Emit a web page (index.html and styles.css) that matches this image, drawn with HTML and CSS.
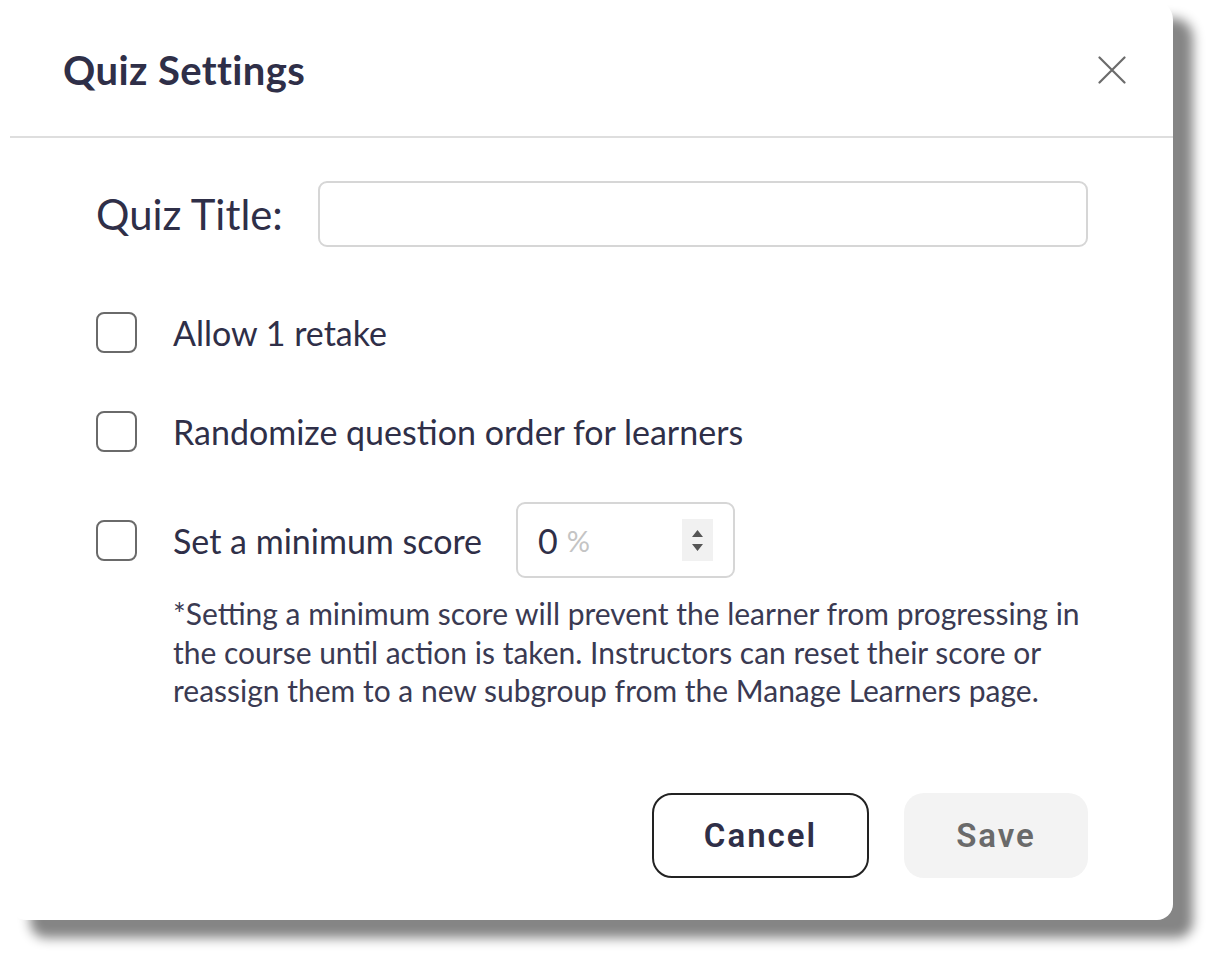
FILE: index.html
```html
<!DOCTYPE html>
<html>
<head>
<meta charset="utf-8">
<link rel="stylesheet" href="styles.css">
</head>
<body>
<div class="dialog">
  <div class="header">
    <h1 class="title">Quiz Settings</h1>
    <button class="close" aria-label="Close">
      <svg width="28" height="28" viewBox="0 0 28 28"><path d="M1.5 1.5 L26.5 26.5 M26.5 1.5 L1.5 26.5" stroke="#6b6b6b" stroke-width="2.2" stroke-linecap="round" fill="none"/></svg>
    </button>
  </div>
  <div class="content">
    <div class="title-row">
      <label class="title-label">Quiz Title:</label>
      <div class="text-input"></div>
    </div>
    <div class="check-row first">
      <span class="checkbox"></span>
      <span class="check-label">Allow 1 retake</span>
    </div>
    <div class="check-row second">
      <span class="checkbox"></span>
      <span class="check-label">Randomize question order for learners</span>
    </div>
    <div class="check-row third">
      <span class="checkbox"></span>
      <span class="check-label">Set a minimum score</span>
      <div class="num-input">
        <span class="num-value">0</span><span class="num-unit">%</span>
        <span class="spinner">
          <svg width="31" height="42" viewBox="0 0 31 42"><path d="M10 18 L15.5 11 L21 18 Z M10 25 L21 25 L15.5 32 Z" fill="#555"/></svg>
        </span>
      </div>
    </div>
    <p class="note">*Setting a minimum score will prevent the learner from progressing in<br>the course until action is taken. Instructors can reset their score or<br>reassign them to a new subgroup from the Manage Learners page.</p>
    <div class="actions">
      <button class="btn cancel">Cancel</button>
      <button class="btn save">Save</button>
    </div>
  </div>
</div>
</body>
</html>
```

FILE: styles.css
```css
* { box-sizing: border-box; }
html, body { margin: 0; padding: 0; background: #fff; }
body {
  font-family: Lato, "Noto Sans", sans-serif;
  color: #2f2f48;
  width: 1226px;
  height: 966px;
  overflow: hidden;
}
.dialog {
  margin-left: 10px;
  width: 1163px;
  height: 920px;
  background: #fff;
  border-radius: 20px 20px 16px 16px;
  box-shadow: 20px 18px 12px #858585;
  display: flex;
  flex-direction: column;
}
.header {
  height: 138px;
  border-bottom: 2px solid #dedede;
  display: flex;
  align-items: center;
  justify-content: space-between;
  padding: 4px 47px 0 53px;
}
.title {
  margin: 0;
  font-size: 40px;
  font-weight: 700;
  letter-spacing: 0.4px;
  color: #2f2f48;
}
.close {
  border: 0;
  background: none;
  padding: 0;
  width: 28px;
  height: 28px;
  display: flex;
}
.content {
  padding: 43px 85px 0 86px;
  display: flex;
  flex-direction: column;
}
.title-row {
  display: flex;
  align-items: center;
  gap: 35px;
}
.title-label {
  font-size: 41.8px;
  white-space: nowrap;
}
.text-input {
  flex: 1;
  height: 66px;
  border: 2px solid #d6d6d6;
  border-radius: 9px;
}
.check-row {
  display: flex;
  align-items: center;
  gap: 36px;
}
.check-row.first { margin-top: 65px; }
.check-row.second { margin-top: 58px; }
.check-row.third { margin-top: 50px; }
.checkbox {
  width: 41px;
  height: 41px;
  border: 2.5px solid #6a6a6a;
  border-radius: 8px;
  flex: none;
}
.check-label {
  font-size: 34px;
  white-space: nowrap;
}
.num-input {
  margin-left: -2px;
  width: 219px;
  height: 76px;
  border: 2px solid #d6d6d6;
  border-radius: 9px;
  display: flex;
  align-items: center;
  padding-left: 20px;
  font-size: 34px;
}
.num-value { color: #2f2f48; }
.num-unit { color: #c4c4c4; margin-left: 9px; font-size: 29px; }
.spinner {
  margin-left: auto;
  margin-right: 20px;
  width: 31px;
  height: 42px;
  background: #f1f1f1;
  display: flex;
}
.note {
  margin: 16px 0 0 77px;
  font-size: 30px;
  line-height: 38.5px;
  color: #3a3a52;
  white-space: nowrap;
}
.actions {
  margin-top: 83px;
  display: flex;
  justify-content: flex-end;
  gap: 35px;
}
.btn {
  height: 85px;
  border-radius: 20px;
  font-family: Roboto, "Liberation Sans", sans-serif;
  font-weight: 600;
  font-size: 33px;
  letter-spacing: 2px;
}
.cancel {
  width: 217px;
  background: #fff;
  border: 2px solid #222;
  color: #2f2f48;
}
.save {
  width: 184px;
  background: #f3f3f3;
  border: 0;
  color: #6a6a6a;
}
```
